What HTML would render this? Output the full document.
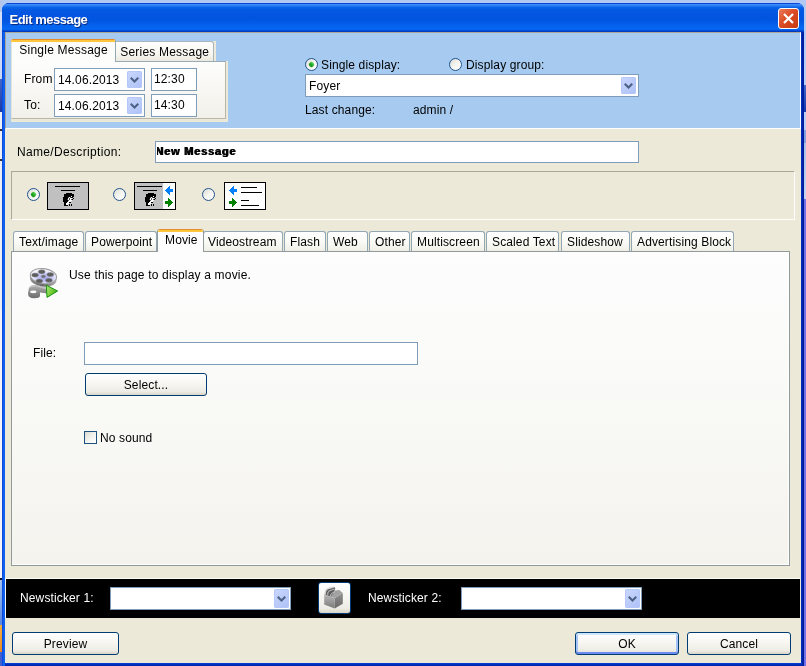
<!DOCTYPE html>
<html><head><meta charset="utf-8">
<style>
*{box-sizing:border-box;margin:0;padding:0}
html,body{width:806px;height:666px;overflow:hidden}
body{position:relative;background:#b2c9f3;font-family:"Liberation Sans",sans-serif;font-size:12px;color:#000;letter-spacing:.13px}
.a{position:absolute}
.t{position:absolute;white-space:nowrap;line-height:14px;height:14px}
/* window frame */
#frame{left:2px;top:3px;width:802px;height:663px;border-radius:7px 7px 0 0;background:linear-gradient(90deg,#0a3ad8 0,#0e5ce8 1px,#1066f2 2px,#0c5ae8 3px,#0c5ae8 4px,#0a3fd6 4px,#0a3fd6 798px,#0034c4 799px,#0026b0 800px,#001896 802px)}
#fb{left:5px;top:663px;width:797px;height:3px;background:linear-gradient(180deg,#0a40d8 0,#0030c0 50%,#001ea0 100%)}
#title{left:2px;top:3px;width:802px;height:29px;border-radius:7px 7px 0 0;
 background:linear-gradient(180deg,#0846d8 0,#0846d8 1px,#3a8af8 1.5px,#2e80f4 2.5px,#0a64e8 4.5px,#0458e2 7px,#0054e0 16px,#0258e4 19px,#0464ee 23px,#0468f2 26px,#0460ea 27px,#0040c8 28px,#0038b8 29px)}
#title .cap{left:7.5px;top:9px;color:#fff;font-weight:bold;font-size:13px;letter-spacing:-.5px;line-height:15px;text-shadow:1px 1px 0 #0a2a80}
#close{left:778px;top:8px;width:21px;height:21px;border:1px solid #fff;border-radius:3px;
 background:linear-gradient(135deg,#ea7a5c 0,#dc4c26 45%,#c63a10 100%)}
#body{left:5px;top:32px;width:796px;height:631px;background:#ece9d8}
#hdr{left:5px;top:32px;width:796px;height:97px;background:#a6caf0;border:1px solid #fff;border-left-color:#aca899;border-top-color:#aca899}
/* inputs */
.in{position:absolute;background:#fff;border:1px solid #7f9db9}
.dd{position:absolute;width:15px;height:17px;border-radius:2px;box-shadow:inset 0 0 0 1px rgba(180,198,248,.9);
 background:linear-gradient(135deg,#cbd8fd 0,#bdcdfa 45%,#adc1f7 100%)}
.dd svg{position:absolute;left:3px;top:6px}
.dd.t19{height:19px}.dd.t19 svg{top:7px}
.btn{position:absolute;border:1px solid #003c74;border-radius:3px;height:23px;text-align:center;line-height:21px;padding-top:1px;
 background:linear-gradient(180deg,#fff 0,#f6f5f0 50%,#ecebe4 85%,#d8d4c6 100%)}
.radio{position:absolute;width:13px;height:13px;border-radius:50%;border:1px solid #21538f;
 background:linear-gradient(135deg,#dcdcd6 0,#f4f4f0 50%,#fff 100%)}
.radio.on::after{content:"";position:absolute;left:3px;top:3px;width:5px;height:5px;border-radius:35%;transform:rotate(45deg) scale(.95);background:linear-gradient(180deg,#5ad85a 0,#21a121 60%,#189818 100%)}
.tab{position:absolute;top:231px;height:20px;border:1px solid #91a7b4;border-bottom:none;border-radius:3px 3px 0 0;
 background:linear-gradient(180deg,#fff 0,#f9f9f4 60%,#efeee6 100%)}
.tab span{position:absolute;top:3px;white-space:nowrap;line-height:14px}
</style></head><body>
<div id="root" style="position:absolute;left:0;top:0;width:806px;height:666px;will-change:transform">
<div class="a" style="left:0;top:0;width:3px;height:666px;background:linear-gradient(180deg,#b4c6ec 0,#b4c6ec 12px,#d4e0f8 12px,#c8d8f6 79px,#4468c8 79px,#1838a8 112px,#eef0f8 112px,#eef0f8 129px,#303040 129px,#303040 131px,#eef0f8 131px,#eef0f8 159px,#303040 159px,#303040 161px,#eceef6 161px,#eceef6 310px,#f2f2f8 310px,#f2f2f8 578px,#101030 578px,#101030 580px,#a4c4f4 580px,#5a88e0 625px,#f4b040 625px,#e88820 652px,#4060d0 652px,#4060d0 666px)"></div>
<div class="a" style="left:803px;top:0;width:3px;height:666px;background:linear-gradient(180deg,#b2c9f3 0,#bccef4 85px,#4468c8 85px,#1838a8 112px,#bccef4 112px,#bccef4 130px,#80a0e0 130px,#80a0e0 143px,#a8c0e8 143px,#c4d4f2 199px,#7272e6 199px,#7272e6 666px)"></div>
<div class="a" id="frame"></div>
<div class="a" id="title"><div class="t cap">Edit message</div></div>
<div class="a" id="close"><svg width="19" height="19" viewBox="0 0 19 19" style="position:absolute;left:0;top:0"><path d="M5 5L14 14M14 5L5 14" stroke="#fff" stroke-width="2.2" stroke-linecap="butt"/></svg></div>
<div class="a" id="body"></div>
<div class="a" id="fb"></div>
<div class="a" id="hdr"></div>

<!-- header small tab control -->
<div class="a" style="left:11px;top:61px;width:217px;height:61px;background:#ece9d8"></div>
<div class="a" style="left:116px;top:41px;width:100px;height:20px;background:#ece9d8"></div>
<div class="a" style="left:11px;top:61px;width:215px;height:58px;background:linear-gradient(180deg,#fdfdfc 0,#f8f7f3 50%,#f1f0e9 100%);border:1px solid #d6d4c8;border-left-color:#e4e4de;border-top-color:#9aabb6;border-right-color:#b8b6a8;border-bottom-color:#b8b6a8"></div>
<div class="a" style="left:116px;top:41px;width:98px;height:20px;border:1px solid #a9b6bd;border-left:none;border-bottom:none;border-radius:0 3px 0 0;background:linear-gradient(180deg,#fff 0,#f7f6f0 60%,#eceade 100%)"></div>
<div class="t" style="left:120.3px;top:45px;letter-spacing:.2px">Series Message</div>
<div class="a" style="left:11px;top:39px;width:105px;height:23px;border-right:1px solid #91a7b4;box-shadow:inset 1px 0 0 #e6e6e0;border-radius:2px 2px 0 0;background:#fcfcfb;overflow:hidden"><div style="height:1px;background:#e68b2c"></div><div style="height:2px;background:#ffc73c"></div></div>
<div class="t" style="left:19.3px;top:43px;letter-spacing:.23px">Single Message</div>
<div class="t" style="left:24px;top:72px">From</div>
<div class="t" style="left:24px;top:98px">To:</div>
<div class="in" style="left:54px;top:68px;width:91px;height:23px"></div>
<div class="t" style="left:58px;top:73px">14.06.2013</div>
<div class="dd" style="left:127px;top:71px"><svg width="9" height="6" viewBox="0 0 9 6"><path d="M0 1.5L1.5 0L4.5 3L7.5 0L9 1.5L4.5 6Z" fill="#4d6185"/></svg></div>
<div class="in" style="left:151px;top:68px;width:46px;height:23px"></div>
<div class="t" style="left:154px;top:72px">12:30</div>
<div class="in" style="left:54px;top:94px;width:91px;height:23px"></div>
<div class="t" style="left:58px;top:99px">14.06.2013</div>
<div class="dd" style="left:127px;top:97px"><svg width="9" height="6" viewBox="0 0 9 6"><path d="M0 1.5L1.5 0L4.5 3L7.5 0L9 1.5L4.5 6Z" fill="#4d6185"/></svg></div>
<div class="in" style="left:151px;top:94px;width:46px;height:23px"></div>
<div class="t" style="left:154px;top:98px">14:30</div>
<!-- display selector -->
<div class="radio on" style="left:305px;top:58px"></div>
<div class="t" style="left:321px;top:58px">Single display:</div>
<div class="radio" style="left:449px;top:58px"></div>
<div class="t" style="left:466px;top:58px">Display group:</div>
<div class="in" style="left:305px;top:74px;width:334px;height:23px"></div>
<div class="t" style="left:309px;top:79px">Foyer</div>
<div class="dd" style="left:621px;top:77px"><svg width="9" height="6" viewBox="0 0 9 6"><path d="M0 1.5L1.5 0L4.5 3L7.5 0L9 1.5L4.5 6Z" fill="#4d6185"/></svg></div>
<div class="t" style="left:305px;top:103px">Last change:</div>
<div class="t" style="left:413px;top:103px">admin /</div>

<!-- name row -->
<div class="t" style="left:17px;top:145px;letter-spacing:.33px">Name/Description:</div>
<div class="in" style="left:155px;top:141px;width:484px;height:22px"></div>
<div class="a" style="left:157px;top:142px;width:478px;height:20px;overflow:hidden"><span style="position:absolute;left:-2px;top:3px;font-size:11px;font-weight:bold;line-height:13px;white-space:nowrap;letter-spacing:.8px;text-shadow:.9px 0 0 #000">New Message</span></div>
<!-- group box -->
<div class="a" style="left:11px;top:171px;width:784px;height:49px;border:1px solid #fff;border-left-color:#aca899;border-top-color:#aca899"></div>
<div class="radio on" style="left:27px;top:188px"></div>
<svg class="a" style="left:47px;top:182px" width="42" height="28" viewBox="0 0 42 28" shape-rendering="crispEdges"><rect x=".5" y=".5" width="41" height="27" fill="#c0c0c0" stroke="#000"/><path d="M8 4.5h25M14 8.5h14" stroke="#000"/><g transform="translate(16,11)"><rect x="3" y="0" width="6" height="1" fill="#000"/><rect x="1" y="1" width="10" height="1" fill="#000"/><rect x="1" y="2" width="10" height="1" fill="#000"/><rect x="1" y="3" width="7" height="1" fill="#000"/><rect x="8" y="3" width="1" height="1" fill="#fff"/><rect x="9" y="3" width="2" height="1" fill="#000"/><rect x="0" y="4" width="5" height="1" fill="#000"/><rect x="5" y="4" width="1" height="1" fill="#555"/><rect x="6" y="4" width="1" height="1" fill="#fff"/><rect x="7" y="4" width="1" height="1" fill="#555"/><rect x="8" y="4" width="2" height="1" fill="#000"/><rect x="0" y="5" width="5" height="1" fill="#000"/><rect x="5" y="5" width="1" height="1" fill="#fff"/><rect x="6" y="5" width="1" height="1" fill="#555"/><rect x="7" y="5" width="2" height="1" fill="#fff"/><rect x="10" y="5" width="1" height="1" fill="#000"/><rect x="0" y="6" width="4" height="1" fill="#000"/><rect x="4" y="6" width="1" height="1" fill="#555"/><rect x="5" y="6" width="1" height="1" fill="#fff"/><rect x="6" y="6" width="1" height="1" fill="#555"/><rect x="7" y="6" width="1" height="1" fill="#fff"/><rect x="8" y="6" width="1" height="1" fill="#555"/><rect x="9" y="6" width="1" height="1" fill="#000"/><rect x="0" y="7" width="5" height="1" fill="#000"/><rect x="5" y="7" width="1" height="1" fill="#555"/><rect x="6" y="7" width="3" height="1" fill="#fff"/><rect x="0" y="8" width="5" height="1" fill="#000"/><rect x="5" y="8" width="3" height="1" fill="#fff"/><rect x="1" y="9" width="3" height="1" fill="#000"/><rect x="4" y="9" width="2" height="1" fill="#fff"/><rect x="6" y="9" width="2" height="1" fill="#000"/><rect x="1" y="10" width="2" height="1" fill="#000"/><rect x="3" y="10" width="3" height="1" fill="#fff"/><rect x="1" y="11" width="2" height="1" fill="#000"/><rect x="3" y="11" width="2" height="1" fill="#fff"/><rect x="6" y="11" width="1" height="1" fill="#000"/><rect x="8" y="11" width="1" height="1" fill="#000"/><rect x="1" y="12" width="4" height="1" fill="#000"/><rect x="6" y="12" width="1" height="1" fill="#000"/><rect x="8" y="12" width="1" height="1" fill="#000"/></g></svg>
<div class="radio" style="left:113px;top:188px"></div>
<svg class="a" style="left:134px;top:182px" width="42" height="28" viewBox="0 0 42 28"><g shape-rendering="crispEdges"><rect x=".5" y=".5" width="41" height="27" fill="#fff" stroke="#000"/><rect x="1" y="1" width="28" height="26" fill="#c0c0c0"/><path d="M3 4.5h25M9 8.5h14" stroke="#000"/><g transform="translate(11,11)"><rect x="3" y="0" width="6" height="1" fill="#000"/><rect x="1" y="1" width="10" height="1" fill="#000"/><rect x="1" y="2" width="10" height="1" fill="#000"/><rect x="1" y="3" width="7" height="1" fill="#000"/><rect x="8" y="3" width="1" height="1" fill="#fff"/><rect x="9" y="3" width="2" height="1" fill="#000"/><rect x="0" y="4" width="5" height="1" fill="#000"/><rect x="5" y="4" width="1" height="1" fill="#555"/><rect x="6" y="4" width="1" height="1" fill="#fff"/><rect x="7" y="4" width="1" height="1" fill="#555"/><rect x="8" y="4" width="2" height="1" fill="#000"/><rect x="0" y="5" width="5" height="1" fill="#000"/><rect x="5" y="5" width="1" height="1" fill="#fff"/><rect x="6" y="5" width="1" height="1" fill="#555"/><rect x="7" y="5" width="2" height="1" fill="#fff"/><rect x="10" y="5" width="1" height="1" fill="#000"/><rect x="0" y="6" width="4" height="1" fill="#000"/><rect x="4" y="6" width="1" height="1" fill="#555"/><rect x="5" y="6" width="1" height="1" fill="#fff"/><rect x="6" y="6" width="1" height="1" fill="#555"/><rect x="7" y="6" width="1" height="1" fill="#fff"/><rect x="8" y="6" width="1" height="1" fill="#555"/><rect x="9" y="6" width="1" height="1" fill="#000"/><rect x="0" y="7" width="5" height="1" fill="#000"/><rect x="5" y="7" width="1" height="1" fill="#555"/><rect x="6" y="7" width="3" height="1" fill="#fff"/><rect x="0" y="8" width="5" height="1" fill="#000"/><rect x="5" y="8" width="3" height="1" fill="#fff"/><rect x="1" y="9" width="3" height="1" fill="#000"/><rect x="4" y="9" width="2" height="1" fill="#fff"/><rect x="6" y="9" width="2" height="1" fill="#000"/><rect x="1" y="10" width="2" height="1" fill="#000"/><rect x="3" y="10" width="3" height="1" fill="#fff"/><rect x="1" y="11" width="2" height="1" fill="#000"/><rect x="3" y="11" width="2" height="1" fill="#fff"/><rect x="6" y="11" width="1" height="1" fill="#000"/><rect x="8" y="11" width="1" height="1" fill="#000"/><rect x="1" y="12" width="4" height="1" fill="#000"/><rect x="6" y="12" width="1" height="1" fill="#000"/><rect x="8" y="12" width="1" height="1" fill="#000"/></g></g><g shape-rendering="crispEdges"><rect x="35" y="4" width="1" height="1" fill="#0080ff"/><rect x="34" y="5" width="2" height="1" fill="#0080ff"/><rect x="33" y="6" width="3" height="1" fill="#0080ff"/><rect x="32" y="7" width="7" height="1" fill="#0080ff"/><rect x="31" y="8" width="8" height="1" fill="#0080ff"/><rect x="32" y="9" width="7" height="1" fill="#0080ff"/><rect x="33" y="10" width="3" height="1" fill="#0080ff"/><rect x="34" y="11" width="2" height="1" fill="#0080ff"/><rect x="35" y="12" width="1" height="1" fill="#0080ff"/></g><g shape-rendering="crispEdges"><rect x="34" y="16" width="1" height="1" fill="#008000"/><rect x="34" y="17" width="2" height="1" fill="#008000"/><rect x="34" y="18" width="3" height="1" fill="#008000"/><rect x="31" y="19" width="7" height="1" fill="#008000"/><rect x="31" y="20" width="8" height="1" fill="#008000"/><rect x="31" y="21" width="7" height="1" fill="#008000"/><rect x="34" y="22" width="3" height="1" fill="#008000"/><rect x="34" y="23" width="2" height="1" fill="#008000"/><rect x="34" y="24" width="1" height="1" fill="#008000"/></g></svg>
<div class="radio" style="left:202px;top:188px"></div>
<svg class="a" style="left:224px;top:182px" width="42" height="28" viewBox="0 0 42 28"><g shape-rendering="crispEdges"><rect x=".5" y=".5" width="41" height="27" fill="#fff" stroke="#000"/><path d="M17 5.5h16M17 10.5h21M17 18.5h8M17 23.5h18" stroke="#000"/></g><g shape-rendering="crispEdges"><rect x="9" y="4" width="1" height="1" fill="#0080ff"/><rect x="8" y="5" width="2" height="1" fill="#0080ff"/><rect x="7" y="6" width="3" height="1" fill="#0080ff"/><rect x="6" y="7" width="7" height="1" fill="#0080ff"/><rect x="5" y="8" width="8" height="1" fill="#0080ff"/><rect x="6" y="9" width="7" height="1" fill="#0080ff"/><rect x="7" y="10" width="3" height="1" fill="#0080ff"/><rect x="8" y="11" width="2" height="1" fill="#0080ff"/><rect x="9" y="12" width="1" height="1" fill="#0080ff"/></g><g shape-rendering="crispEdges"><rect x="8" y="16" width="1" height="1" fill="#008000"/><rect x="8" y="17" width="2" height="1" fill="#008000"/><rect x="8" y="18" width="3" height="1" fill="#008000"/><rect x="5" y="19" width="7" height="1" fill="#008000"/><rect x="5" y="20" width="8" height="1" fill="#008000"/><rect x="5" y="21" width="7" height="1" fill="#008000"/><rect x="8" y="22" width="3" height="1" fill="#008000"/><rect x="8" y="23" width="2" height="1" fill="#008000"/><rect x="8" y="24" width="1" height="1" fill="#008000"/></g></svg>
<!-- main tabs -->
<div class="tab" style="left:13px;width:71px"><span style="left:5px">Text/image</span></div>
<div class="tab" style="left:85px;width:72px"><span style="left:5px">Powerpoint</span></div>
<div class="tab" style="left:203px;width:80px"><span style="left:4px">Videostream</span></div>
<div class="tab" style="left:284px;width:42px"><span style="left:5px">Flash</span></div>
<div class="tab" style="left:327px;width:41px"><span style="left:5px">Web</span></div>
<div class="tab" style="left:369px;width:41px"><span style="left:5px">Other</span></div>
<div class="tab" style="left:411px;width:74px"><span style="left:5px">Multiscreen</span></div>
<div class="tab" style="left:486px;width:73px"><span style="left:5px">Scaled Text</span></div>
<div class="tab" style="left:561px;width:69px"><span style="left:5px">Slideshow</span></div>
<div class="tab" style="left:631px;width:103px"><span style="left:5px">Advertising Block</span></div>

<div class="a" style="left:11px;top:251px;width:779px;height:315px;border:1px solid #919b9c;box-shadow:inset -1px -1px 0 #fdfdfb;background:linear-gradient(180deg,#fdfdfe 0,#f9f9f6 50%,#f4f3ee 100%)"></div>
<div class="a" style="left:157px;top:229px;width:47px;height:23px;border:1px solid #919b9c;border-bottom:none;border-top:none;border-radius:3px 3px 0 0;background:#fdfdfe;overflow:hidden"><div style="height:1px;background:#e68b2c"></div><div style="height:2px;background:#ffc73c"></div></div>
<div class="t" style="left:165px;top:233px">Movie</div>

<!-- panel content -->
<svg class="a" style="left:24px;top:264px" width="40" height="38" viewBox="0 0 40 38">
<defs>
<radialGradient id="rg" cx=".55" cy=".6" r=".6"><stop offset="0" stop-color="#a4a4f8"/><stop offset=".45" stop-color="#c8c8fa"/><stop offset=".8" stop-color="#f0f0fc"/><stop offset="1" stop-color="#ffffff"/></radialGradient>
<linearGradient id="sg" x1="0" y1="0" x2="1" y2="0"><stop offset="0" stop-color="#8c8c8c"/><stop offset=".5" stop-color="#6a6a6a"/><stop offset="1" stop-color="#b0b0b0"/></linearGradient>
<linearGradient id="fg" x1="0" y1="0" x2="0" y2="1"><stop offset="0" stop-color="#b4b4b4"/><stop offset=".5" stop-color="#8c8c8c"/><stop offset="1" stop-color="#6e6e6e"/></linearGradient>
<linearGradient id="gg" x1="0" y1="0" x2="1" y2=".4"><stop offset="0" stop-color="#b4ec84"/><stop offset=".5" stop-color="#7cd040"/><stop offset="1" stop-color="#48b414"/></linearGradient>
</defs>
<path d="M5 23.5Q7 20.5 12 21L23 24V29.5L16 28.5V32Q15.5 34.2 10 34.2Q4 34.2 4 29.5Z" fill="url(#fg)"/>
<path d="M5 23.5Q7 20.5 12 21L23 24V25.5L12 22.6Q7.5 22 5.5 24.5Z" fill="#c4c4c4"/>
<ellipse cx="9.3" cy="27.8" rx="3.2" ry="1.4" fill="#fff"/>
<g transform="rotate(7 19.4 12.3)">
<ellipse cx="19.6" cy="15" rx="13.3" ry="7.6" fill="url(#sg)"/>
<ellipse cx="19.4" cy="12.1" rx="13.2" ry="7.5" fill="url(#rg)" stroke="#a0a0a2" stroke-width="1.1"/>
</g>
<g fill="#5e5e5e" stroke="#8a8a8a" stroke-width=".5">
<ellipse cx="17.7" cy="7.7" rx="3.4" ry="2"/>
<ellipse cx="11.1" cy="11.1" rx="3.4" ry="2"/>
<ellipse cx="26.3" cy="10.6" rx="3.4" ry="2"/>
<ellipse cx="15.4" cy="16.9" rx="3.4" ry="2"/>
<ellipse cx="24.9" cy="16.3" rx="3.4" ry="2"/>
<ellipse cx="19.4" cy="12.5" rx="2.1" ry="1.4" fill="#707070"/>
</g>
<path d="M22.3 21.2L33.6 27L23 33.4Z" fill="url(#gg)" stroke="#189010" stroke-width="1" stroke-linejoin="round"/>
</svg>
<div class="t" style="left:69px;top:268px;letter-spacing:.18px">Use this page to display a movie.</div>
<div class="t" style="left:33px;top:346px">File:</div>
<div class="in" style="left:84px;top:342px;width:334px;height:23px"></div>
<div class="btn" style="left:85px;top:373px;width:122px">Select...</div>
<div class="a" style="left:84px;top:431px;width:13px;height:13px;border:1px solid #1c5180;background:linear-gradient(135deg,#dcdcd4 0,#f2f2ee 50%,#fff 100%)"></div>
<div class="t" style="left:100px;top:431px">No sound</div>
<!-- bottom band -->
<div class="a" style="left:5px;top:578px;width:795px;height:40px;background:#000;border-left:1px solid #fbfaf4;border-top:1px solid #fbfaf4"></div>
<div class="t" style="left:20px;top:591px;color:#fff">Newsticker 1:</div>
<div class="in" style="left:110px;top:587px;width:181px;height:23px"></div>
<div class="dd t19" style="left:274px;top:589px"><svg width="9" height="6" viewBox="0 0 9 6"><path d="M0 1.5L1.5 0L4.5 3L7.5 0L9 1.5L4.5 6Z" fill="#4d6185"/></svg></div>
<div class="a" style="left:318px;top:582px;width:33px;height:32px;border:1px solid #003c74;border-radius:3px;background:linear-gradient(180deg,#fff 0,#f6f5f0 50%,#ecebe4 85%,#d8d4c6 100%)"></div>
<svg class="a" style="left:314px;top:578px" width="40" height="40" viewBox="0 0 40 40">
<defs><linearGradient id="c1" x1="0" y1="0" x2="0" y2="1"><stop offset="0" stop-color="#b6b6b6"/><stop offset="1" stop-color="#7a7a7a"/></linearGradient>
<linearGradient id="c2" x1="0" y1="0" x2="0" y2="1"><stop offset="0" stop-color="#909090"/><stop offset="1" stop-color="#686868"/></linearGradient></defs>
<path d="M10.2 16.8L20.7 20.1V30.6L10.2 26.4Z" fill="url(#c1)"/>
<path d="M20.7 20.1L28.8 15V25.8L20.7 30.6Z" fill="url(#c2)"/>
<path d="M10.2 16.8L12.5 13.5L25.2 12L28.8 15L20.7 20.1Z" fill="#a2a2a2"/>
<path d="M11 16.5Q10.5 12 14 10.5L19.5 9Q21.8 9 21 11.5L19.5 14.5L17 18.5Z" fill="#5c5c5c"/>
<path d="M11.2 16.6Q10.6 12.2 14 10.6L19.8 9" stroke="#dadada" stroke-width="1.5" fill="none"/>
<path d="M13.8 17.3Q13.2 14 16 12.6L20.8 11" stroke="#b4b4b4" stroke-width="1.1" fill="none"/>
<path d="M16.5 18.4Q16.4 16 18.4 14.8L21 13.6" stroke="#c8c8c8" stroke-width="1" fill="none"/>
</svg>
<div class="t" style="left:368px;top:591px;color:#fff">Newsticker 2:</div>
<div class="in" style="left:461px;top:587px;width:181px;height:23px"></div>
<div class="dd t19" style="left:625px;top:589px"><svg width="9" height="6" viewBox="0 0 9 6"><path d="M0 1.5L1.5 0L4.5 3L7.5 0L9 1.5L4.5 6Z" fill="#4d6185"/></svg></div>
<!-- bottom buttons -->
<div class="btn" style="left:12px;top:632px;width:107px">Preview</div>
<div class="btn" style="left:575px;top:632px;width:104px;box-shadow:inset 0 2px 0 #cee7ff,inset 0 -2px 0 #6d8aee,inset 2px 0 0 #a5c3f4,inset -2px 0 0 #a5c3f4">OK</div>
<div class="btn" style="left:687px;top:632px;width:104px">Cancel</div>
<!--SECTIONS-->
</div>
</body></html>
